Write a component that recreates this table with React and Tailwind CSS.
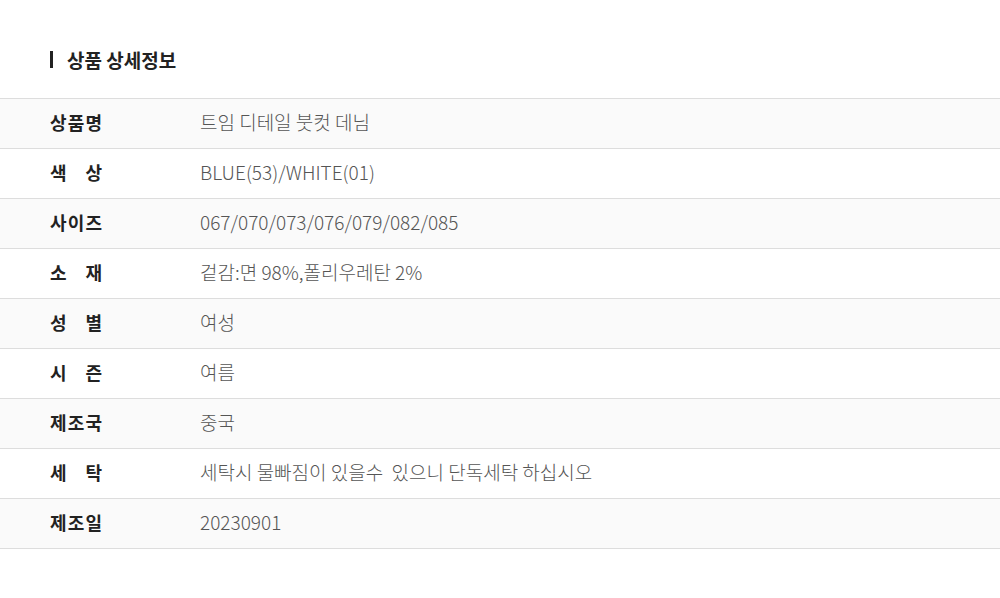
import React from 'react';

const rows = [
  ['상품명', '트임 디테일 붓컷 데님'],
  ['색상', 'BLUE(53)/WHITE(01)'],
  ['사이즈', '067/070/073/076/079/082/085'],
  ['소재', '겉감:면 98%,폴리우레탄 2%'],
  ['성별', '여성'],
  ['시즌', '여름'],
  ['제조국', '중국'],
  ['세탁', '세탁시 물빠짐이 있을수  있으니 단독세탁 하십시오'],
  ['제조일', '20230901'],
];

const Label = ({ text }) => (
  <div className="w-[52px] flex justify-between font-bold text-[18px] text-[#222]">
    {text.split('').map((c, i) => (
      <span key={i}>{c}</span>
    ))}
  </div>
);

export default function App() {
  return (
    <div
      className="w-[1000px] h-[598px] bg-white"
      style={{ fontFamily: '"Noto Sans CJK KR", "Noto Sans", sans-serif' }}
    >
      <div className="pt-[48px] pl-[50px] h-[98px] flex items-start">
        <div className="flex items-center gap-[14px] h-[22px]">
          <span className="w-[3px] h-[17px] bg-[#222]"></span>
          <h2 className="text-[19px] font-bold text-[#222] leading-none">상품 상세정보</h2>
        </div>
      </div>
      <div className="border-t border-[#dddddd]">
        {rows.map(([k, v], i) => (
          <div
            key={k}
            className={`h-[50px] flex items-center pb-[3px] border-b border-[#dddddd] ${i % 2 === 0 ? 'bg-[#fafafa]' : 'bg-white'}`}
          >
            <div className="w-[200px] pl-[50px]">
              <Label text={k} />
            </div>
            <div className="text-[19px] font-light text-[#555] whitespace-pre">{v}</div>
          </div>
        ))}
      </div>
    </div>
  );
}
